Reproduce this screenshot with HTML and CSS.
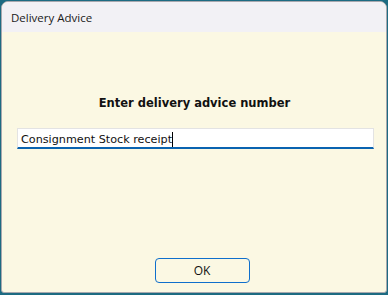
FILE: index.html
```html
<!DOCTYPE html>
<html>
<head>
<meta charset="utf-8">
<link rel="stylesheet" href="styles.css">
</head>
<body>
<div class="window">
  <div class="titlebar">Delivery Advice</div>
  <div class="content">
    <div class="prompt">Enter delivery advice number</div>
    <div class="field">Consignment Stock receipt<span class="caret"></span></div>
    <div class="spacer"></div>
    <div class="actions"><button class="btn">OK</button></div>
  </div>
</div>
</body>
</html>
```
FILE: styles.css
```css
html, body {
  margin: 0;
  padding: 0;
  width: 388px;
  height: 295px;
  background: #1d6b82;
  overflow: hidden;
}
.window {
  box-sizing: border-box;
  width: 386px;
  height: 292px;
  margin: 1px 0 0 1px;
  border: 1px solid #a8a8ae;
  border-radius: 7px 7px 3px 3px;
  overflow: hidden;
  display: flex;
  flex-direction: column;
  background: #fbf8e3;
}
.titlebar {
  height: 30px;
  flex: none;
  background: #f2f1f5;
  font-family: "Open Sans", "Noto Sans", sans-serif;
  font-size: 11.5px;
  color: #1a1a1a;
  display: flex;
  align-items: center;
  padding-left: 9px;
}
.content {
  flex: 1;
  display: flex;
  flex-direction: column;
  padding: 64px 12px 9px 15px;
}
.prompt {
  font-family: "DejaVu Sans", Verdana, sans-serif;
  font-weight: bold;
  font-size: 11.5px;
  color: #111;
  text-align: center;
  line-height: 14px;
  padding-right: 2px;
}
.field {
  margin-top: 18px;
  box-sizing: border-box;
  height: 21px;
  background: #fff;
  border: 1px solid #e3e3e3;
  border-bottom: 2px solid #0a63b0;
  font-family: "DejaVu Sans", Tahoma, sans-serif;
  font-size: 11.2px;
  color: #111;
  padding: 2px 0 0 3px;
  line-height: 15px;
  display: flex;
  align-items: center;
}
.caret {
  display: inline-block;
  width: 1px;
  height: 15px;
  background: #000;
}
.spacer { flex: 1; }
.actions {
  display: flex;
  justify-content: center;
  padding-left: 13px;
}
.btn {
  box-sizing: border-box;
  width: 95px;
  height: 25px;
  background: #fbf8e3;
  border: 1px solid #0f6fcc;
  border-radius: 4px;
  font-family: "Open Sans", "Noto Sans", sans-serif;
  font-size: 12px;
  color: #111;
  padding: 0;
}
```
